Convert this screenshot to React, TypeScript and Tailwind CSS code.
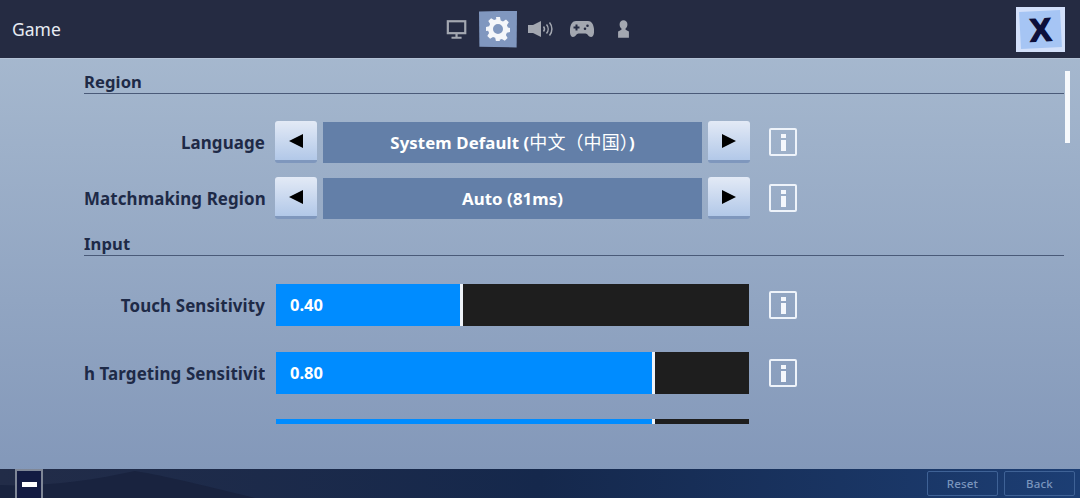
import React from "react";

const Info = ({ ml }: { ml?: boolean }) => (
  <div className={`${ml ? "ml-[20px]" : "ml-[19px]"} flex h-[28px] w-[28px] shrink-0 items-center justify-center rounded-[2px] border-2 border-[#eef3fa]`}>
    <div className="flex flex-col items-center gap-[2px]">
      <div className="h-[4px] w-[5px] bg-[#f4f7fc]" />
      <div className="h-[11px] w-[5px] bg-[#f4f7fc]" />
    </div>
  </div>
);

const Arrow = ({ dir }: { dir: "l" | "r" }) => (
  <div className="flex h-[42px] w-[42px] shrink-0 items-center justify-center rounded-[3px] border-b-[3px] border-[#7f97bd] bg-gradient-to-b from-[#e3eaf6] to-[#b2c8e8]">
    <svg width="14" height="14" viewBox="0 0 14 14">
      <path d={dir === "l" ? "M14 0V14L0 7Z" : "M0 0V14L14 7Z"} fill="#000" />
    </svg>
  </div>
);

const Selector = ({ label, value }: { label: string; value: React.ReactNode }) => (
  <div className="flex h-[42px] items-center">
    <div className="w-[181px] shrink-0 whitespace-nowrap pt-[2px] text-right text-[16.9px] font-bold tracking-[0.12px] text-[#1e2a47]">{label}</div>
    <div className="ml-[10px]"><Arrow dir="l" /></div>
    <div className="ml-[6px] flex h-[41px] w-[379px] items-center justify-center whitespace-nowrap bg-[#637fa8] pt-[1px] text-[16.8px] font-bold tracking-[0.1px] text-white">
      {value}
    </div>
    <div className="ml-[6px]"><Arrow dir="r" /></div>
    <Info />
  </div>
);

const Slider = ({ label, value, pct }: { label: string; value: string; pct: number }) => (
  <div className="flex h-[42px] items-center">
    <div className="w-[181px] shrink-0 overflow-hidden whitespace-nowrap pt-[1px] text-right text-[16.9px] font-bold tracking-[0.12px] text-[#1e2a47]">{label}</div>
    <div className="ml-[11px] flex h-[42px] w-[473px] bg-[#1e1e1e]">
      <div className="flex h-full items-center bg-[#008cff] pl-[14px] text-[16.5px] font-bold text-white" style={{ width: `${pct}%` }}>
        {value}
      </div>
      <div className="h-full w-[3px] bg-[#eef2f8]" />
    </div>
    <Info ml />
  </div>
);

const Heading = ({ children, className }: { children: React.ReactNode; className?: string }) => (
  <div className={`border-b border-[#4a5a78] text-[16.6px] font-bold leading-[22px] tracking-[0.1px] text-[#1e2a47] ${className ?? ""}`}>{children}</div>
);

export default function App() {
  return (
    <div
      className="relative flex h-[498px] w-[1080px] flex-col overflow-hidden bg-gradient-to-b from-[#aabcd1] to-[#8196b8]"
      style={{ fontFamily: '"Noto Sans", "Noto Sans CJK SC", sans-serif' }}
    >
      <header className="grid h-[59px] shrink-0 grid-cols-[1fr_auto_1fr] items-center border-b border-[#b4c2d6] bg-[#252b42] pl-[12px] pr-[15px]">
        <div className="text-[17.5px] text-[#e8ecf3]">Game</div>
        <div className="mr-[1px] flex items-center">
          <svg className="mr-[11px]" width="22" height="21" viewBox="0 0 24 22" fill="none">
            <rect x="2" y="2" width="19" height="13" stroke="#a3a7b0" strokeWidth="2.4" />
            <path d="M11.5 15v4M6 20h11" stroke="#a3a7b0" strokeWidth="2.4" />
          </svg>
          <div className="flex h-[37px] w-[38px] items-center justify-center bg-[#8097bf] [clip-path:polygon(0_3%,100%_0,99%_100%,1%_98%)]">
            <svg width="24" height="24" viewBox="0 0 24 24">
              <path
                fillRule="evenodd"
                fill="#f4f6fa"
                d="M10 0h4l.7 3.4 2.3 1 3-1.900 2.800 2.800-1.900 3 1 2.300L24 11v4l-3.100.7-1 2.300 1.700 2.900-2.800 2.800-3-1.800-2.100.9L13.900 24h-4l-.7-3.200-2.200-.9-2.900 1.800-2.800-2.800 1.800-2.900-1-2.200L0 13.900V10l3.100-.8 1-2.200-1.800-3L5.100 1.200l3 1.900 2.200-.9ZM12 7a5 5 0 1 0 0 10 5 5 0 0 0 0-10Z"
              />
            </svg>
          </div>
          <svg className="ml-[11px]" width="25" height="18" viewBox="0 0 25 18" fill="none">
            <path d="M0 5h5l8-4v16l-8-4H0Z" fill="#a3a7b0" />
            <path d="M15.500 6.500a4 4 0 0 1 0 5M18.500 4.500a7 7 0 0 1 0 9M21.500 2.500a10 10 0 0 1 0 13" stroke="#a3a7b0" strokeWidth="1.500" />
          </svg>
          <svg className="ml-[17px]" width="24" height="16" viewBox="0 0 24 16">
            <path
              fillRule="evenodd"
              fill="#a3a7b0"
              d="M6 0h12c3.500 0 5.500 3 6 8 .4 4.500-.5 8-3 8-2.500 0-3.500-3.500-5.500-3.500h-7C6.500 12.500 5.500 16 3 16 .5 16-.4 12.500 0 8 .5 3 2.500 0 6 0ZM5.500 3.500v2h-2v2h2v2h2v-2h2v-2h-2v-2ZM17.500 3.500a1.300 1.300 0 1 0 0 2.600 1.300 1.300 0 0 0 0-2.600ZM15 6.500a1.300 1.300 0 1 0 0 2.600 1.300 1.300 0 0 0 0-2.600Z"
            />
          </svg>
          <svg className="ml-[23px]" width="13" height="18" viewBox="0 0 12 16">
            <path fill="#a3a7b0" d="M6 0a3.600 3.600 0 0 1 3.600 3.800c0 1.700-.7 3-1.700 3.700v1.300l3.100 1.600V16H1v-5.600l3.100-1.600V7.500C3.100 6.800 2.400 5.500 2.400 3.800A3.600 3.600 0 0 1 6 0Z" />
          </svg>
        </div>
        <div className="flex justify-end">
          <div className="flex h-[45px] w-[49px] items-center justify-center bg-[#d3e0fa]">
            <div className="flex h-[37px] w-[41px] rotate-[-3deg] items-center justify-center bg-[#a6c5f4]">
              <span className="text-[32px] font-black leading-none text-[#0d0f3a] [font-family:'Liberation_Sans',sans-serif] [-webkit-text-stroke:1.500px_#0d0f3a]">X</span>
            </div>
          </div>
        </div>
      </header>

      <main className="h-[365px] shrink-0 overflow-hidden pl-[84px] pr-[16px] pt-[12px]">
        <Heading>Region</Heading>
        <div className="mt-[27px] flex flex-col gap-[14px]">
          <Selector
            label="Language"
            value={
              <span>
                System Default (<span className="text-[18px] font-normal">中文（中国）</span>)
              </span>
            }
          />
          <Selector label="Matchmaking Region" value="Auto (81ms)" />
        </div>
        <Heading className="mt-[14px]">Input</Heading>
        <div className="mt-[28px] flex flex-col gap-[26px]">
          <Slider label="Touch Sensitivity" value="0.40" pct={39} />
          <Slider label="h Targeting Sensitivit" value="0.80" pct={79.5} />
          <div className="-mt-px">
            <Slider label="" value="" pct={79.5} />
          </div>
        </div>
      </main>

      <div className="absolute left-[1065px] top-[71px] h-[72px] w-[5px] bg-[#f7f9fc]" />

      <div className="flex-1" />

      <footer className="relative flex h-[29px] shrink-0 items-center justify-between overflow-hidden bg-gradient-to-r from-[#222c48] via-[#15284c] to-[#1c3e74] pl-[15px] pr-[5px]">
        <svg className="absolute left-0 top-0" width="400" height="29" viewBox="0 0 400 29">
          <path d="M0 29V16C40 18 90 12 135 2c20 3 60 12 120 27Z" fill="#19233f" />
        </svg>
        <div className="relative flex h-[29px] w-[28px] items-center justify-center border-2 border-b-0 border-[#7f8797] bg-[#131b42]">
          <div className="h-[5px] w-[15px] bg-white" />
        </div>
        <div className="relative flex gap-[6px]">
          {["Reset", "Back"].map((t) => (
            <div
              key={t}
              className="flex h-[25px] w-[71px] items-center justify-center rounded-[2px] border border-[#3f6296] text-[11.5px] font-medium tracking-[0.2px] text-[#7a95bd]"
            >
              {t}
            </div>
          ))}
        </div>
      </footer>
    </div>
  );
}
